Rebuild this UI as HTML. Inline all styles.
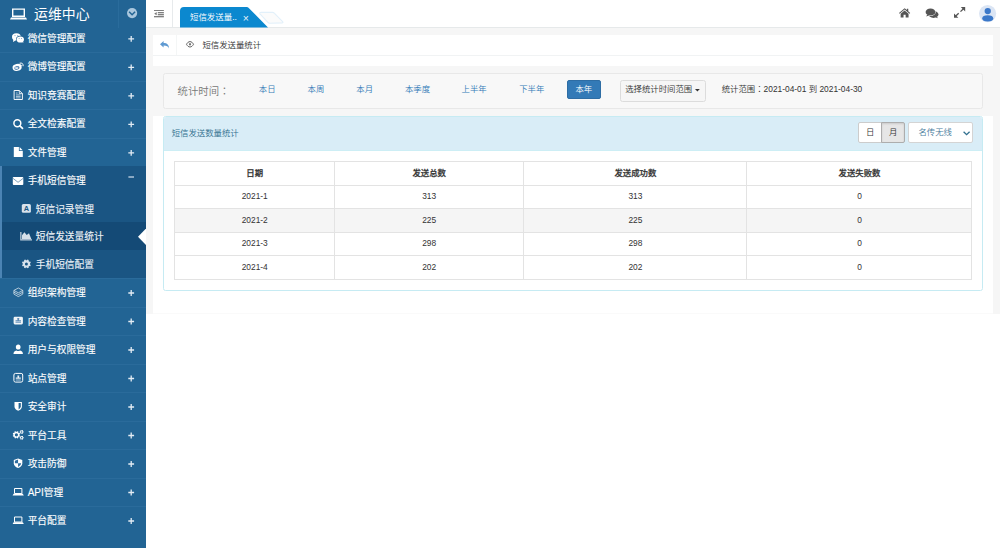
<!DOCTYPE html>
<html lang="zh-CN">
<head>
<meta charset="utf-8">
<title>运维中心</title>
<style>
html,body{margin:0;padding:0;width:1000px;height:548px;overflow:hidden;background:#fff;
  font-family:"Liberation Sans","Noto Sans CJK SC",sans-serif;}
*{box-sizing:border-box}
svg{display:block;overflow:visible}
.abs{position:absolute}
/* sidebar */
.sb{position:absolute;left:0;top:0;width:146px;height:548px;background:#226494;overflow:hidden}
.mi{position:absolute;left:0;width:146px;height:28.5px;border-top:1px solid #2a6b9b;color:#fff;
  font-weight:400;-webkit-text-stroke:0.12px #fff;font-size:9.7px;line-height:28.5px;white-space:nowrap}
.mi .ic{position:absolute;left:13px;top:9.5px;width:10px;height:10px}
.mi .tx{position:absolute;left:27.7px;top:0.2px}
.mi .pl{position:absolute;left:128.2px;top:11.4px;width:5.6px;height:5.6px}
.mi .pl:before{content:"";position:absolute;left:0;top:2.3px;width:5.6px;height:1px;background:#dbe6f0}
.mi .pl:after{content:"";position:absolute;left:2.3px;top:0;width:1px;height:5.6px;background:#dbe6f0}
.sub .ic{left:22px}
.sub .tx{left:35.8px;top:0.5px;color:#eef3f8;-webkit-text-stroke-color:#eef3f8}
.sb .hd{position:absolute;left:0;top:0;width:146px;height:27.5px;background:#226494;color:#fff}
.sb .hd .tt{position:absolute;left:34px;top:0.2px;line-height:28px;font-size:13.9px;white-space:nowrap}
/* main */
.main{position:absolute;left:146px;top:0;width:854px;height:548px;background:#fff}
.grey{position:absolute;left:146px;top:27px;width:854px;height:287px;background:#f6f6f6}
.top{position:absolute;left:146px;top:0;width:854px;height:27.5px;background:#fff;border-bottom:1px solid #e6e9ea}
.t8{font-size:8.4px;white-space:nowrap;position:absolute;line-height:12px;font-weight:350}
.lnk{color:#337ab7}
.tc{font-family:"Liberation Sans","Noto Sans CJK TC",sans-serif}

#tb{border-collapse:collapse;table-layout:fixed;font-size:8.4px;color:#333;font-weight:350}
#tb th,#tb td{border:1px solid #e3e3e3;height:23.45px;padding:0;text-align:center;vertical-align:middle;line-height:12px}
#tb th{font-weight:500;-webkit-text-stroke:0.25px #333;padding-bottom:1.4px}
#tb td{padding-bottom:1.2px}
#tb tr.hv td{background:#f5f5f5}
</style>
</head>
<body>
<div class="main"></div>
<div class="grey"></div>

<!-- ============ SIDEBAR ============ -->
<div class="sb" id="sb">
  <div class="mi" style="top:23.8px"><span class="tx">微信管理配置</span></div>
  <div class="mi" style="top:52.3px"><span class="tx">微博管理配置</span></div>
  <div class="mi" style="top:80.8px"><span class="tx">知识竞赛配置</span></div>
  <div class="mi" style="top:109.3px"><span class="tx">全文检索配置</span></div>
  <div class="mi" style="top:137.8px"><span class="tx">文件管理</span></div>

  <div class="abs" style="left:0;top:166.3px;width:146px;height:111.5px;background:#1a5583;border-left:2px solid #4c84b4"></div>
  <div class="abs" style="left:2px;top:222px;width:144px;height:27.6px;background:#144a76"></div>
  <div class="mi" style="top:166.3px;border-top-color:transparent"><span class="tx">手机短信管理</span></div>
  <div class="mi sub" style="top:194.3px;border-top-color:transparent;height:27.7px;line-height:27.7px"><span class="tx">短信记录管理</span></div>
  <div class="mi sub" style="top:221.8px;border-top-color:transparent;height:27.7px;line-height:27.7px"><span class="tx">短信发送量统计</span></div>
  <div class="mi sub" style="top:249.5px;border-top-color:transparent;height:27.7px;line-height:27.7px"><span class="tx">手机短信配置</span></div>
  <svg class="abs" style="left:137.5px;top:227.5px" width="8.5" height="17.6" viewBox="0 0 8.5 17.6"><path d="M8.5 0 L0 8.8 L8.5 17.6 Z" fill="#fff"/></svg>

  <div class="mi" style="top:278px"><span class="tx">组织架构管理</span></div>
  <div class="mi" style="top:306.5px"><span class="tx">内容检查管理</span></div>
  <div class="mi" style="top:335px"><span class="tx">用户与权限管理</span></div>
  <div class="mi" style="top:363.5px"><span class="tx">站点管理</span></div>
  <div class="mi" style="top:392px"><span class="tx">安全审计</span></div>
  <div class="mi" style="top:420.5px"><span class="tx">平台工具</span></div>
  <div class="mi" style="top:449px"><span class="tx">攻击防御</span></div>
  <div class="mi" style="top:477.5px"><span class="tx"><span style="font-size:10px">API</span>管理</span></div>
  <div class="mi" style="top:506px"><span class="tx">平台配置</span></div>

  <!--ICONS-START--><svg class="abs" style="left:0;top:0" width="146" height="548" viewBox="0 0 146 548">
<g><ellipse cx="16.4" cy="36.9" rx="4.4" ry="3.7" fill="#fff"/><path d="M13.4 39.4 L13 41.9 L15.6 40.4Z" fill="#fff"/><ellipse cx="20.2" cy="39.4" rx="4.2" ry="3.6" fill="#226494"/><ellipse cx="20.3" cy="39.5" rx="3.7" ry="3.1" fill="#fff"/><path d="M21.8 41.8 L23.4 43 L23 41Z" fill="#fff"/><circle cx="15" cy="35.6" r="0.55" fill="#7a9cc0"/><circle cx="17.8" cy="35.6" r="0.55" fill="#7a9cc0"/><circle cx="19.1" cy="38.6" r="0.5" fill="#7a9cc0"/><circle cx="21.5" cy="38.6" r="0.5" fill="#7a9cc0"/></g>
<g><ellipse cx="17.1" cy="67.4" rx="4.6" ry="3.5" fill="#fff" transform="rotate(-12 17.1 67.4)"/><ellipse cx="16.9" cy="67.9" rx="2.7" ry="1.9" fill="#5d8ab5" transform="rotate(-12 16.9 67.9)"/><ellipse cx="16.6" cy="68" rx="1.5" ry="1.1" fill="#fff"/><circle cx="16.9" cy="67.7" r="0.5" fill="#5d8ab5"/><path d="M19.6 63.2 Q23.4 62.4 23.1 66.2" fill="none" stroke="#fff" stroke-width="1"/><path d="M19.9 64.9 Q21.6 64.5 21.5 66.2" fill="none" stroke="#fff" stroke-width="0.8"/></g>
<g fill="none" stroke="#fff"><path d="M14.1 90.5 H19.3 L22.4 93.6 V99.5 H14.1 Z" stroke-width="0.95"/><path d="M19.3 90.5 V93.6 H22.4" stroke-width="0.8"/><path d="M15.9 94.9 H20.6 M15.9 96.4 H20.6 M15.9 97.9 H20.6 M15.9 93 H17.6" stroke-width="0.75" opacity=".85"/></g>
<g fill="none" stroke="#fff"><circle cx="17.35" cy="123.2" r="3.45" stroke-width="1.5"/><path d="M19.9 125.8 L22.5 128.4" stroke-width="1.7" stroke-linecap="round"/></g>
<g fill="#fff"><path d="M13.8 147 H18.9 V150.9 H22.8 V156.9 H13.8 Z"/><path d="M19.6 147.1 L22.7 150.2 H19.6 Z"/></g>
<g><rect x="12.8" y="176.9" width="10.5" height="8" rx="0.9" fill="#fff"/><path d="M12.9 178.3 L18.05 182.3 L23.2 178.3" fill="none" stroke="#1a5784" stroke-width="0.7" opacity=".8"/></g>
<g><rect x="21.8" y="204" width="9.1" height="8.8" rx="1.5" fill="#d8e2ec"/><text x="26.35" y="211.1" font-family="Liberation Sans, sans-serif" font-weight="700" font-size="7.4" text-anchor="middle" fill="#1a5784">A</text></g>
<g fill="#d6e0ea"><path d="M20.2 232 H21.5 V239.3 H32 V240.6 H20.2 Z" opacity=".85"/><path d="M22 239.3 V235.2 L24.4 232.2 L26.7 234.9 L29 233.3 L31.4 239.3 Z"/></g>
<path d="M30.01 264.41 L30.78 264.95 L30.24 266.25 L29.32 266.09 L28.59 266.82 L28.75 267.74 L27.45 268.28 L26.91 267.51 L25.89 267.51 L25.35 268.28 L24.05 267.74 L24.21 266.82 L23.48 266.09 L22.56 266.25 L22.02 264.95 L22.79 264.41 L22.79 263.39 L22.02 262.85 L22.56 261.55 L23.48 261.71 L24.21 260.98 L24.05 260.06 L25.35 259.52 L25.89 260.29 L26.91 260.29 L27.45 259.52 L28.75 260.06 L28.59 260.98 L29.32 261.71 L30.24 261.55 L30.78 262.85 L30.01 263.39Z M27.90 263.90 A1.50 1.50 0 1 0 24.90 263.90 A1.50 1.50 0 1 0 27.90 263.90 Z" fill="#d8e2ec" fill-rule="evenodd"/>
<g fill="none" stroke="#fff" stroke-width="0.75" opacity=".85"><path d="M18.35 288 L22.8 290.4 L18.35 292.8 L13.9 290.4 Z"/><path d="M13.9 292.2 L18.35 294.6 L22.8 292.2"/><path d="M13.9 294.1 L18.35 296.6 L22.8 294.1"/><path d="M13.9 290.4 V294.1 M22.8 290.4 V294.1"/></g>
<g><rect x="13.6" y="316.8" width="9.3" height="7.6" rx="1.3" fill="#fff" opacity=".93"/><path d="M17.2 318 H19.3 L19 320.2 H21 V321.6 H15.5 V320.2 H17.5 Z" fill="#5f8cb7"/><path d="M15.5 322.5 H21" stroke="#5f8cb7" stroke-width="0.7"/></g>
<g fill="#fff"><ellipse cx="18.2" cy="347" rx="2.35" ry="2.6"/><path d="M13.5 353.9 Q13.4 351.3 16.4 350.4 Q18.2 351.4 20 350.4 Q23 351.3 22.9 353.9 Z"/></g>
<g><rect x="13.9" y="373.4" width="8.8" height="8.7" rx="1.6" fill="none" stroke="#fff" stroke-width="1"/><path d="M17.3 375.5 H19.3 L19 377.4 H20.8 V378.8 H15.8 V377.4 H17.6 Z" fill="#fff" opacity=".9"/><path d="M15.8 380 H20.8" stroke="#fff" stroke-width="0.7" opacity=".9"/></g>
<g><path d="M14.5 402 H21.9 V406.4 Q21.9 409 18.2 410.8 Q14.5 409 14.5 406.4 Z" fill="#fff"/><path d="M18.6 403.1 H20.8 V406.3 Q20.8 408.2 18.6 409.4 Z" fill="#226494"/></g>
<g fill="#fff" fill-rule="evenodd"><path d="M19.37 435.22 L20.05 435.68 L19.60 436.76 L18.80 436.60 L18.20 437.20 L18.36 438.00 L17.28 438.45 L16.82 437.77 L15.98 437.77 L15.52 438.45 L14.44 438.00 L14.60 437.20 L14.00 436.60 L13.20 436.76 L12.75 435.68 L13.43 435.22 L13.43 434.38 L12.75 433.92 L13.20 432.84 L14.00 433.00 L14.60 432.40 L14.44 431.60 L15.52 431.15 L15.98 431.83 L16.82 431.83 L17.28 431.15 L18.36 431.60 L18.20 432.40 L18.80 433.00 L19.60 432.84 L20.05 433.92 L19.37 434.38Z M18.00 434.80 A1.60 1.60 0 1 0 14.80 434.80 A1.60 1.60 0 1 0 18.00 434.80 Z"/><path d="M23.16 431.39 L23.71 431.47 L23.71 432.33 L23.16 432.41 L22.87 432.91 L23.07 433.42 L22.33 433.85 L21.99 433.42 L21.41 433.42 L21.07 433.85 L20.33 433.42 L20.53 432.91 L20.24 432.41 L19.69 432.33 L19.69 431.47 L20.24 431.39 L20.53 430.89 L20.33 430.38 L21.07 429.95 L21.41 430.38 L21.99 430.38 L22.33 429.95 L23.07 430.38 L22.87 430.89Z M22.45 431.90 A0.75 0.75 0 1 0 20.95 431.90 A0.75 0.75 0 1 0 22.45 431.90 Z"/><path d="M23.16 437.29 L23.71 437.37 L23.71 438.23 L23.16 438.31 L22.87 438.81 L23.07 439.32 L22.33 439.75 L21.99 439.32 L21.41 439.32 L21.07 439.75 L20.33 439.32 L20.53 438.81 L20.24 438.31 L19.69 438.23 L19.69 437.37 L20.24 437.29 L20.53 436.79 L20.33 436.28 L21.07 435.85 L21.41 436.28 L21.99 436.28 L22.33 435.85 L23.07 436.28 L22.87 436.79Z M22.45 437.80 A0.75 0.75 0 1 0 20.95 437.80 A0.75 0.75 0 1 0 22.45 437.80 Z"/></g>
<g><path d="M18.05 458.4 L22.3 460 V463.2 Q22.3 466.2 18.05 468.1 Q13.8 466.2 13.8 463.2 V460 Z" fill="#fff"/><path d="M18.05 459.6 V463.2 H14.9 V460.8 Z" fill="#2f6ea0"/><path d="M18.05 463.2 H21.2 Q21.2 465.4 18.05 466.9 Z" fill="#2f6ea0"/></g>
<path d="M14.50 488.50 H21.90 V493.50 H14.50 Z" fill="none" stroke="#fff" stroke-width="1.00"/><path d="M13.60 493.70 H22.80 L23.80 495.40 H12.60 Z" fill="#fff"/>
<path d="M14.50 517.00 H21.90 V522.00 H14.50 Z" fill="none" stroke="#fff" stroke-width="1.00"/><path d="M13.60 522.20 H22.80 L23.80 523.90 H12.60 Z" fill="#fff"/>
<path d="M128.30 38.80 h5.8 M131.20 35.90 v5.8 M128.30 67.30 h5.8 M131.20 64.40 v5.8 M128.30 95.80 h5.8 M131.20 92.90 v5.8 M128.30 124.30 h5.8 M131.20 121.40 v5.8 M128.30 152.80 h5.8 M131.20 149.90 v5.8 M128.30 293.00 h5.8 M131.20 290.10 v5.8 M128.30 321.50 h5.8 M131.20 318.60 v5.8 M128.30 350.00 h5.8 M131.20 347.10 v5.8 M128.30 378.50 h5.8 M131.20 375.60 v5.8 M128.30 407.00 h5.8 M131.20 404.10 v5.8 M128.30 435.50 h5.8 M131.20 432.60 v5.8 M128.30 464.00 h5.8 M131.20 461.10 v5.8 M128.30 492.50 h5.8 M131.20 489.60 v5.8 M128.30 521.00 h5.8 M131.20 518.10 v5.8 " stroke="#e3ecf4" stroke-width="1.3" fill="none"/>
<path d="M128.4 177 h5.6" stroke="#c6d6e6" stroke-width="1.3" fill="none"/>
</svg><!--ICONS-END-->
  <div class="hd">
    <svg class="abs" style="left:10px;top:8px" width="17" height="12" viewBox="0 0 17 12"><path d="M2.7 1.1 H14.3 V8.3 H2.7 Z" fill="none" stroke="#fff" stroke-width="1.4"/><path d="M1 9.4 H16 L17 11.5 H0 Z" fill="#fff"/></svg>
    <span class="tt">运维中心</span>
    <span class="abs" style="left:118px;top:0;width:1px;height:27.5px;background:#2a6c9c"></span>
    <svg class="abs" style="left:127.4px;top:8.2px" width="10.2" height="10.2" viewBox="0 0 10.2 10.2"><circle cx="5.1" cy="5.1" r="5.1" fill="#aac7de"/><path d="M2.1 3.8 L5.1 6.8 L8.1 3.8" fill="none" stroke="#226494" stroke-width="1.5"/></svg>
  </div>
</div>

<!-- ============ TOP BAR ============ -->
<div class="top"></div>

<!-- hamburger -->
<svg class="abs" style="left:154px;top:9.8px" width="9.9" height="7.4" viewBox="0 0 9.9 7.4">
  <path d="M0 0.15h9.9v0.95H0z M3.8 2.2h6.1v0.95H3.8z M3.8 4.25h6.1v0.95H3.8z M0 6.3h9.9v0.95H0z" fill="#555"/><path d="M2.7 2.1 V5.3 L0.2 3.7z" fill="#777"/>
</svg>
<span class="abs" style="left:172px;top:0;width:1px;height:27px;background:#e7eaec"></span>
<!-- tab -->
<svg class="abs" style="left:180px;top:7px" width="90" height="20.5" viewBox="0 0 90 20.5">
  <path d="M0 20.5 V4 Q0 0 4 0 H66.5 Q68 0 69 1.2 L88 20.5 Z" fill="#0b88cf"/>
  <path d="M81.2 5.4 H92.6 Q93.6 5.4 94.3 6.1 L102.6 14.5 Q103.6 15.8 102 15.9 L89.6 16.2 Q88.6 16.2 87.9 15.4 L80 6.9 Q79 5.4 81.2 5.4 Z" fill="#fbfbfb" stroke="#e2f0fa" stroke-width="1.1"/>
</svg>
<span class="t8" style="left:190px;top:11.4px;color:#fff;font-size:8.45px">短信发送量..</span>
<span class="abs" style="left:242.8px;top:12.1px;color:#fff;font-size:10.5px;line-height:12px;opacity:.9">×</span>

<!-- right icons -->
<svg class="abs" style="left:898.8px;top:7.6px" width="11.2" height="9.5" viewBox="0 0 11.6 10" preserveAspectRatio="none">
  <path d="M5.8 0.2 L0 5.2 L0.7 6 L5.8 1.7 L10.9 6 L11.6 5.2 L9.6 3.4 V0.8 H8.2 V2.2 Z" fill="#555"/>
  <path d="M5.8 2.6 L1.7 6 V10 H4.7 V7 H6.9 V10 H9.9 V6 Z" fill="#555"/>
</svg>
<svg class="abs" style="left:925.3px;top:7.7px" width="13.8" height="10.4" viewBox="0 0 13.8 10.4">
  <ellipse cx="8.5" cy="6.4" rx="5" ry="3.5" fill="#555"/><path d="M10.4 9.2 L12.7 10.2 L12 8.2 Z" fill="#555"/>
  <ellipse cx="5.5" cy="4" rx="5.3" ry="4" fill="#fff"/>
  <ellipse cx="5.5" cy="4" rx="4.9" ry="3.6" fill="#555"/><path d="M2.2 6.2 L1.3 8.5 L4.3 7.3 Z" fill="#555"/>
</svg>
<svg class="abs" style="left:954px;top:7.1px" width="11.2" height="10.8" viewBox="0 0 11.2 10.8">
  <path d="M6.8 0 H11.2 V4.4 Z M4.4 10.8 H0 V6.4 Z" fill="#555"/>
  <path d="M9.7 1.5 L6.5 4.6 M1.5 9.3 L4.7 6.2" stroke="#555" stroke-width="1.3" fill="none"/>
</svg>
<svg class="abs" style="left:978.8px;top:5px" width="17.2" height="17.2" viewBox="0 0 17.2 17.2">
  <circle cx="8.6" cy="8.6" r="8.6" fill="#dbe5f4"/>
  <circle cx="8.75" cy="6.05" r="3.15" fill="#3b78c9"/>
  <path d="M3.2 13.6 C3.2 11.3 5.4 10.3 8.75 10.3 C12.1 10.3 14.3 11.3 14.3 13.6 C14.3 15.6 12.1 16.4 8.75 16.4 C5.4 16.4 3.2 15.6 3.2 13.6Z" fill="#3b78c9"/>
</svg>

<!-- breadcrumb bar -->
<div class="abs" style="left:153px;top:34.5px;width:840px;height:31px;background:#fff"></div>
<div class="abs" style="left:153px;top:54.8px;width:840px;height:1px;background:#f1f3f4"></div>
<div class="abs" style="left:176.2px;top:34.5px;width:1px;height:20.5px;background:#f4f6f6"></div>
<svg class="abs" style="left:160.4px;top:41px" width="9" height="7.6" viewBox="0 0 9 7.6">
  <path d="M3.6 0 V2 C7.2 2 9 3.8 9 7.6 C8.2 5.4 6.6 4.6 3.6 4.6 V6.6 L0 3.3 Z" fill="#5f9ad2"/>
</svg>
<svg class="abs" style="left:186.3px;top:41.3px" width="8" height="6.6" viewBox="0 0 8 6.6">
  <path d="M0.5 3.3 C1.5 1.5 2.6 0.6 4 0.6 C5.4 0.6 6.5 1.5 7.5 3.3 C6.5 5.1 5.4 6 4 6 C2.6 6 1.5 5.1 0.5 3.3Z" fill="none" stroke="#555" stroke-width="0.9"/>
  <circle cx="4" cy="3.3" r="1.15" fill="#555"/><circle cx="4" cy="3.3" r="0.4" fill="#fff"/>
</svg>
<span class="t8" style="left:202.4px;top:38.6px;color:#333">短信发送量统计</span>

<!-- filter well -->
<div class="abs" style="left:163px;top:73px;width:820px;height:36px;background:#f8f8f8;border:1px solid #e8e8e8;border-radius:2.5px"></div>
<span class="abs" style="left:177.6px;top:85.2px;font-size:10.4px;font-weight:350;line-height:14px;color:#777;white-space:nowrap">统计时间<span class="tc" lang="zh-TW">：</span></span>
<span class="t8 lnk" style="left:258.8px;top:83.2px">本日</span>
<span class="t8 lnk" style="left:307.6px;top:83.2px">本周</span>
<span class="t8 lnk" style="left:356.3px;top:83.2px">本月</span>
<span class="t8 lnk" style="left:404.9px;top:83.2px">本季度</span>
<span class="t8 lnk" style="left:461.6px;top:83.2px">上半年</span>
<span class="t8 lnk" style="left:519.2px;top:83.2px">下半年</span>
<div class="abs" style="left:567.3px;top:80.2px;width:33.3px;height:18.6px;background:#337ab7;border:1px solid #2e6da4;border-radius:2px"></div>
<span class="t8" style="left:575.5px;top:83.2px;color:#fff">本年</span>
<div class="abs" style="left:619.5px;top:80.2px;width:86.6px;height:21.8px;background:#f6f6f6;border:1px solid #dcdcdc;border-radius:2.5px"></div>
<span class="t8" style="left:625.2px;top:83.2px;color:#333">选择统计时间范围</span>
<svg class="abs" style="left:694.8px;top:88.7px" width="4.8" height="2.4" viewBox="0 0 4.8 2.4"><path d="M0 0H4.8L2.4 2.4Z" fill="#333"/></svg>
<span class="t8" style="left:721.7px;top:83.2px;color:#333">统计范围<span class="tc" lang="zh-TW">：</span>2021-04-01 到 2021-04-30</span>

<!-- panel -->
<div class="abs" style="left:153px;top:116px;width:840px;height:198px;background:#fff"></div>
<div class="abs" style="left:163px;top:116px;width:820px;height:175px;background:#fff;border:1px solid #c6ebf3;border-radius:2.5px"></div>
<div class="abs" style="left:164px;top:117px;width:818px;height:34px;background:#d9edf7;border-bottom:1px solid #cdeef5;border-radius:2px 2px 0 0"></div>
<span class="t8" style="left:171.7px;top:127px;color:#31708f">短信发送数量统计</span>
<div class="abs" style="left:858.4px;top:122.3px;width:23.4px;height:20.3px;background:#fff;border:1px solid #ccc;border-radius:2px 0 0 2px"></div>
<div class="abs" style="left:881.2px;top:122.3px;width:23.6px;height:20.3px;background:#e6e6e6;border:1px solid #adadad;border-radius:0 2px 2px 0;box-shadow:inset 0 1px 2px rgba(0,0,0,.12)"></div>
<span class="t8" style="left:866px;top:125.9px;color:#333">日</span>
<span class="t8" style="left:889px;top:125.9px;color:#333">月</span>
<div class="abs" style="left:907.5px;top:122.3px;width:65.8px;height:20.3px;background:#fff;border:1px solid #d4d4d4;border-radius:2px"></div>
<span class="t8" style="left:918.4px;top:125.9px;color:#4a7c9c">名传无线</span>
<svg class="abs" style="left:963.2px;top:130.8px" width="7.2" height="4.6" viewBox="0 0 7.2 4.6"><path d="M0.6 0.7 L3.6 3.7 L6.6 0.7" fill="none" stroke="#31708f" stroke-width="1.3"/></svg>

<div class="abs" style="left:153px;top:313px;width:840px;height:1px;background:#fafafa"></div>
<!-- table -->
<table id="tb" class="abs" style="left:174.3px;top:161.4px;width:797.2px">
  <colgroup><col style="width:159.8px"><col style="width:189.2px"><col style="width:223.2px"><col style="width:225px"></colgroup>
  <tr><th>日期</th><th>发送总数</th><th>发送成功数</th><th>发送失败数</th></tr>
  <tr><td>2021-1</td><td>313</td><td>313</td><td>0</td></tr>
  <tr class="hv"><td>2021-2</td><td>225</td><td>225</td><td>0</td></tr>
  <tr><td>2021-3</td><td>298</td><td>298</td><td>0</td></tr>
  <tr><td>2021-4</td><td>202</td><td>202</td><td>0</td></tr>
</table>

</body>
</html>
